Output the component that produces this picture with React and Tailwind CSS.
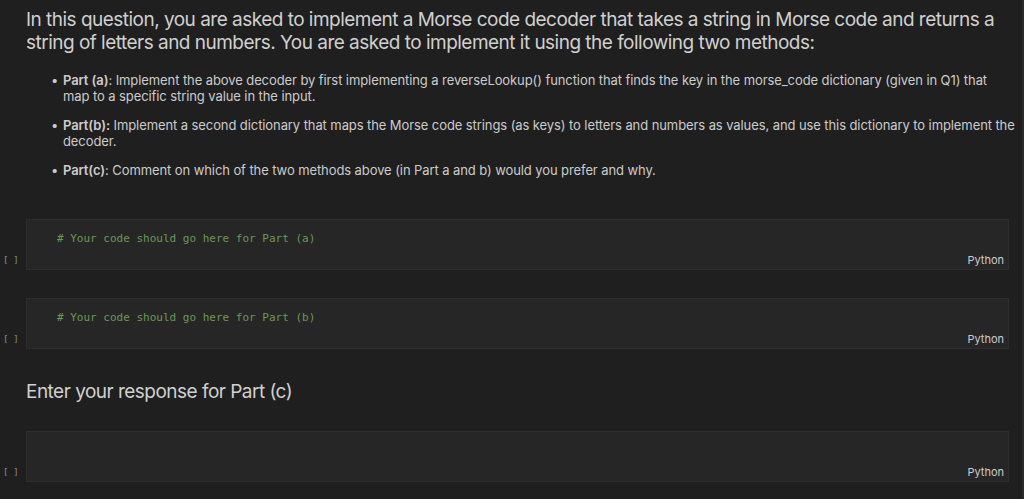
import React from "react";

const sans = { fontFamily: "Inter, 'Noto Sans', sans-serif" };

function Cell({ code }) {
  return (
    <div className="flex">
      <div className="w-[26px] shrink-0 flex flex-col justify-end pb-[3px] pl-[3px]">
        <span className="text-[9px] leading-[14px] text-[#8c8c8c] font-['DejaVu_Sans_Mono',monospace] tracking-[-0.3px]">[ ]</span>
      </div>
      <div className="flex-1 min-w-0 h-[51px] bg-[#262626] border border-[#2e2e2e] flex flex-col">
        <div className="pt-[11px] pl-[30px] h-[26px] text-[11px] leading-[15px] text-[#6a9955] font-['DejaVu_Sans_Mono',monospace] whitespace-pre">
          {code}
        </div>
        <div className="mt-[7px] pr-[4px] text-right text-[11px] leading-[14px] text-[#cccccc]" style={sans}>
          Python
        </div>
      </div>
      <div className="w-[13px] shrink-0" />
    </div>
  );
}

export default function App() {
  return (
    <div className="w-[1024px] h-[499px] bg-[#1f1f1f] overflow-hidden flex" style={sans}>
      <div className="flex-1 min-w-0 flex flex-col">
        <div className="pl-[26px] pt-[8px] text-[#d0d0d0]">
          <h2 className="text-[19px] leading-[23px] font-normal whitespace-nowrap tracking-[-0.52px]">
            In this question, you are asked to implement a Morse code decoder that takes a string in Morse code and returns a
            <br />
            string of letters and numbers. You are asked to implement it using the following two methods:
          </h2>
          <ul className="mt-[18px] pl-[25px] text-[13px] leading-[16px] text-[#cccccc] flex flex-col gap-[13px] tracking-[-0.09px]">
            <li className="flex">
              <span className="w-[12px] shrink-0">•</span>
              <span className="whitespace-nowrap">
                <b className="font-semibold">Part (a)</b>: Implement the above decoder by first implementing a reverseLookup() function that finds the key in the morse_code dictionary (given in Q1) that
                <br />
                map to a specific string value in the input.
              </span>
            </li>
            <li className="flex">
              <span className="w-[12px] shrink-0">•</span>
              <span className="whitespace-nowrap">
                <b className="font-semibold">Part(b):</b> Implement a second dictionary that maps the Morse code strings (as keys) to letters and numbers as values, and use this dictionary to implement the
                <br />
                decoder.
              </span>
            </li>
            <li className="flex">
              <span className="w-[12px] shrink-0">•</span>
              <span className="whitespace-nowrap">
                <b className="font-semibold">Part(c)</b>: Comment on which of the two methods above (in Part a and b) would you prefer and why.
              </span>
            </li>
          </ul>
        </div>
        <div className="mt-[41px]">
          <Cell code="# Your code should go here for Part (a)" />
        </div>
        <div className="mt-[28px]">
          <Cell code="# Your code should go here for Part (b)" />
        </div>
        <div className="mt-[31px] pl-[26px] text-[19px] leading-[24px] text-[#d0d0d0] tracking-[-0.52px]">
          Enter your response for Part (c)
        </div>
        <div className="mt-[27px]">
          <Cell code="" />
        </div>
      </div>
      <div className="w-[2px] bg-[#2a2a2a]" />
    </div>
  );
}
